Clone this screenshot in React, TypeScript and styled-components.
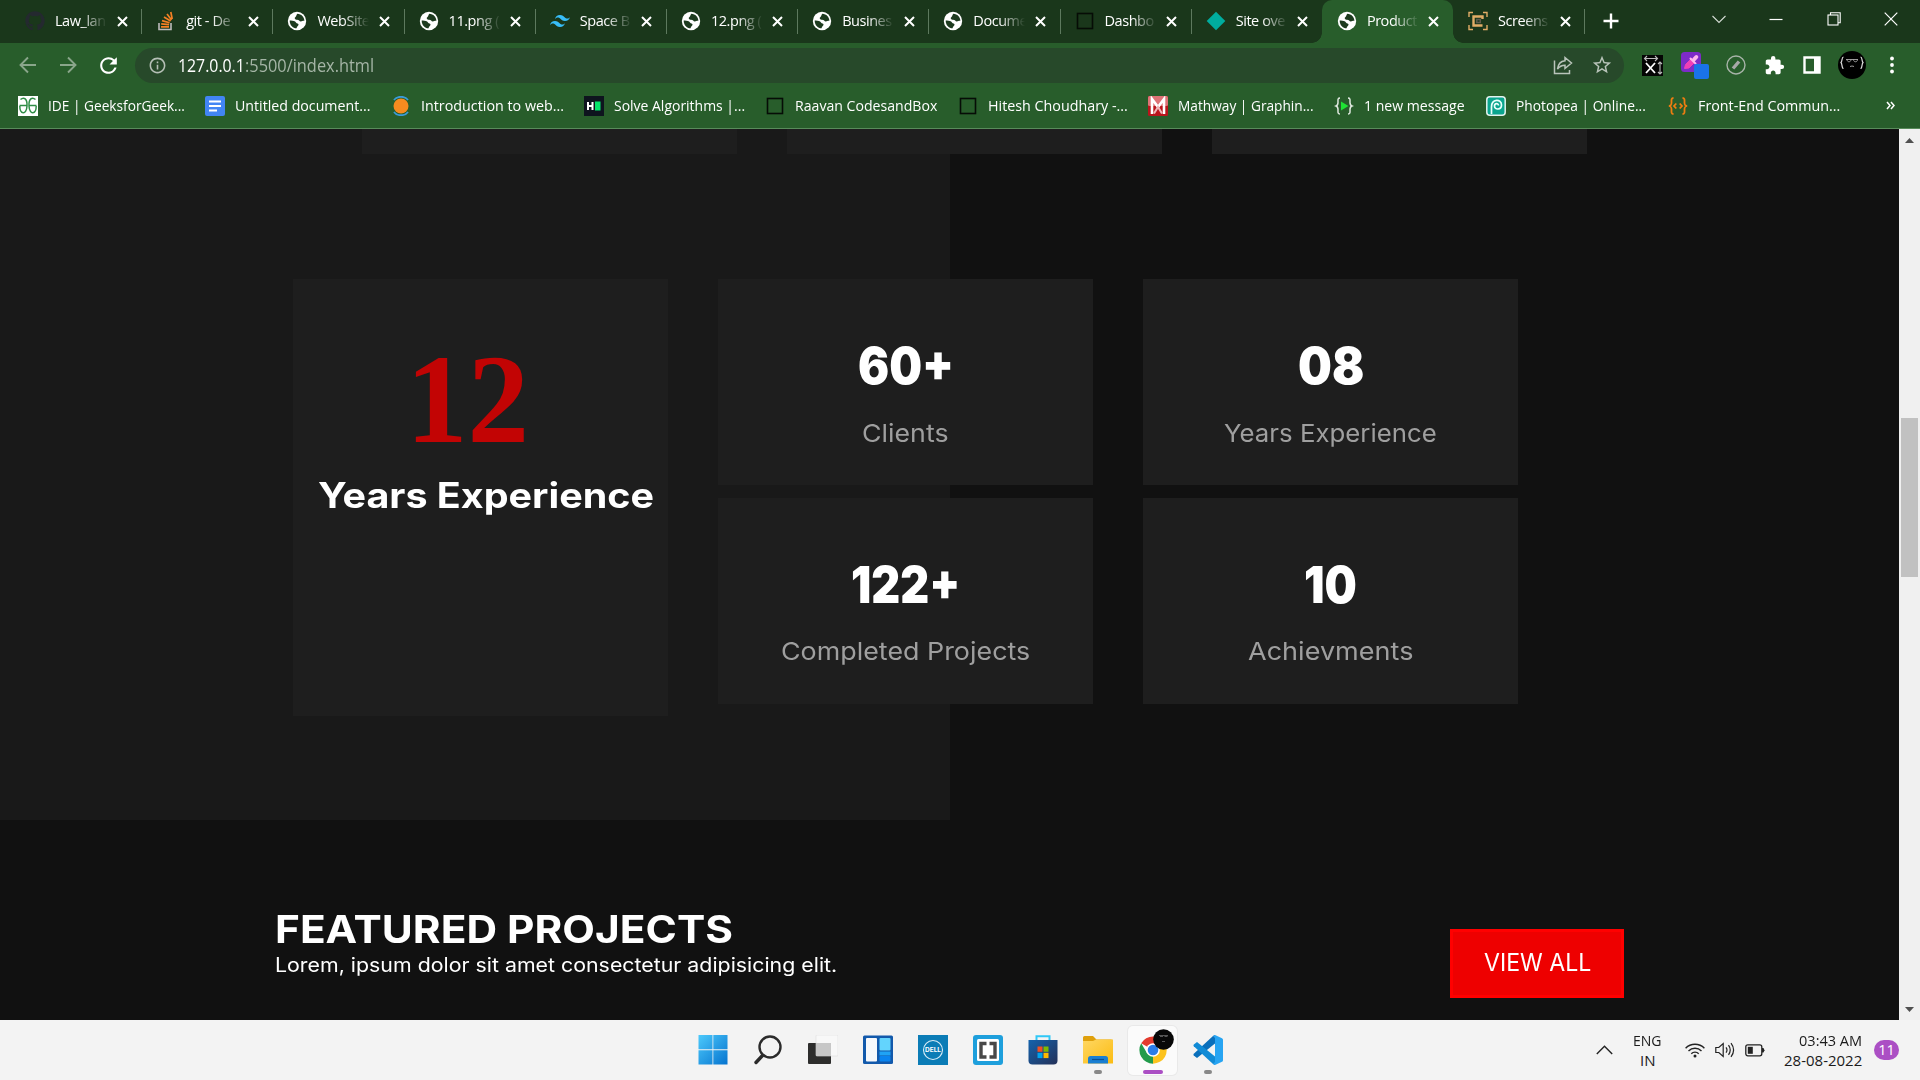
import React, { useLayoutEffect, useRef, useState } from "react";
import styled, { createGlobalStyle, css } from "styled-components";
import { MdExtension, MdRefresh, MdStarBorder, MdInfoOutline } from "react-icons/md";
import { FaGithub } from "react-icons/fa";
import { SiTailwindcss } from "react-icons/si";

const GlobalStyle = createGlobalStyle`
  * { box-sizing: border-box; }
  body { margin: 0; background: #111; overflow: hidden; }
`;

const ui = `"Open Sans", "Noto Sans", sans-serif`;
const display = `Inter, "Open Sans", sans-serif`;

/* ---------- text set to a fixed measure ---------- */

const Measure = styled.span<{ $w: number }>`
  display: block;
  width: ${(p) => p.$w}px;
  white-space: nowrap;
`;
const Run = styled.span`
  display: inline-block;
  transform-origin: 0 50%;
  vertical-align: top;
`;

function FitText({ w, children }: { w: number; children: React.ReactNode }) {
  const ref = useRef<HTMLSpanElement>(null);
  const [scale, setScale] = useState(1);
  useLayoutEffect(() => {
    if (ref.current) setScale(w / ref.current.offsetWidth);
  }, [w]);
  return (
    <Measure $w={w}>
      <Run ref={ref} style={{ transform: `scaleX(${scale})` }}>
        {children}
      </Run>
    </Measure>
  );
}

/* ---------- browser chrome ---------- */

const Screen = styled.div`
  width: 1920px;
  height: 1080px;
  display: flex;
  flex-direction: column;
  font-family: ${ui};
  color: #fff;
  overflow: hidden;
`;

const TabStrip = styled.div`
  height: 43px;
  flex: none;
  display: flex;
  padding-left: 10px;
  background: #1a371b;
`;

const TabBox = styled.div<{ $active?: boolean; $line?: boolean }>`
  position: relative;
  width: 131.2px;
  height: 43px;
  flex: none;
  display: flex;
  align-items: center;
  padding: 0 0 1px 15px;
  ${(p) =>
    p.$active &&
    css`
      background: #285d2b;
      border-radius: 10px 10px 0 0;
      &::before,
      &::after {
        content: "";
        position: absolute;
        bottom: 0;
        width: 10px;
        height: 10px;
      }
      &::before {
        left: -10px;
        background: radial-gradient(circle at 0 0, transparent 9.5px, #285d2b 10px);
      }
      &::after {
        right: -10px;
        background: radial-gradient(circle at 100% 0, transparent 9.5px, #285d2b 10px);
      }
    `}
  ${(p) =>
    p.$line &&
    css`
      &::after {
        content: "";
        position: absolute;
        right: -1px;
        top: 9px;
        width: 1px;
        height: 25px;
        background: #5d795e;
      }
    `}
`;

const TabIcon = styled.span`
  width: 20px;
  height: 20px;
  flex: none;
  display: grid;
  place-items: center;
`;

const TabLabel = styled.span`
  width: 52px;
  margin-left: 10px;
  overflow: hidden;
  white-space: nowrap;
  font-size: 14.5px;
  line-height: 22px;
  letter-spacing: -0.45px;
  mask-image: linear-gradient(90deg, #000 50%, transparent 100%);
`;

const CloseMark = styled.svg`
  width: 11px;
  height: 11px;
  margin-left: 9.5px;
`;

const PlusMark = styled.svg`
  width: 16px;
  height: 16px;
  margin: 13px 0 0 19px;
`;

const WindowControls = styled.div`
  margin-left: auto;
  margin-right: 22px;
  height: 37px;
  display: flex;
  align-items: center;
  gap: 43.5px;
`;

const Toolbar = styled.div`
  height: 40px;
  flex: none;
  display: flex;
  align-items: center;
  padding: 5px 20px 0 17px;
  background: #285d2b;
`;

const NavIcons = styled.div`
  width: 118px;
  display: flex;
  align-items: center;
  gap: 17.5px;
  margin-top: -1px;
  color: #fff;
`;

const Omnibox = styled.div`
  width: 1489px;
  height: 35px;
  border-radius: 18px;
  background: #27492a;
  display: flex;
  align-items: center;
  padding: 0 11px 0 13px;
`;

const Address = styled.div`
  display: flex;
  margin: -1px 0 0 11px;
  flex: 1;
  font-size: 17.5px;
  line-height: 26px;
`;
const AddressPath = styled.div`
  color: #a5b5a6;
`;
const OmniActions = styled.div`
  display: flex;
  align-items: center;
  gap: 18px;
  margin-top: -1px;
  color: #b9c4ba;
`;

const Extensions = styled.div`
  flex: 1;
  display: flex;
  align-items: center;
  justify-content: space-between;
  margin: -1px 0 0 18px;
`;

const BookmarkBar = styled.div`
  height: 46px;
  flex: none;
  display: flex;
  align-items: center;
  padding: 0 24px 0 18px;
  background: #285d2b;
  border-bottom: 1px solid #588b5a;
`;

const Bookmark = styled.div<{ $w: number }>`
  width: ${(p) => p.$w}px;
  flex: none;
  display: flex;
  align-items: center;
  gap: 10px;
  font-size: 14.5px;
  line-height: 22px;
`;

const Overflow = styled.svg`
  width: 10px;
  height: 10px;
  margin-left: auto;
`;

/* ---------- page ---------- */

const Viewport = styled.div`
  height: 891px;
  flex: none;
  display: flex;
`;
const Page = styled.main`
  width: 1899px;
  display: flex;
  flex-direction: column;
  background: #111;
  font-family: ${display};
`;
const StatsSection = styled.section`
  height: 691px;
  background: linear-gradient(90deg, #191919 950px, #111 950px);
`;
const ServiceRow = styled.div`
  display: flex;
  gap: 50px;
  padding-left: 362px;
  margin-bottom: 125px;
`;
const ServiceCard = styled.div`
  width: 375px;
  height: 25px;
  background: #1e1e1e;
`;
const StatsGrid = styled.div`
  display: grid;
  grid-template-columns: 375px 375px 375px;
  grid-template-rows: 206px 206px 12px;
  column-gap: 50px;
  row-gap: 13px;
  padding-left: 293px;
`;
const HeroCard = styled.article`
  grid-row: 1 / 4;
  height: 437px;
  background: #1e1e1e;
  padding: 57px 0 0 25px;
`;
const HeroNumber = styled.div`
  padding-left: 88px;
  font: bold 127px/126px "Liberation Serif", serif;
  color: #c20404;
`;
const HeroLabel = styled.div`
  margin-top: 12px;
  font-size: 35px;
  line-height: 42px;
  font-weight: 700;
`;
const StatCard = styled.article`
  background: #1e1e1e;
  padding-top: 57px;
  display: flex;
  flex-direction: column;
  align-items: center;
`;
const StatNumber = styled.div`
  font-size: 50.6px;
  line-height: 60px;
  font-weight: 900;
`;
const StatLabel = styled.div<{ $gap: number }>`
  margin-top: ${(p) => p.$gap}px;
  font-size: 24.6px;
  line-height: 30px;
  color: #9f9f9f;
`;
const Featured = styled.section`
  height: 200px;
  display: flex;
  justify-content: space-between;
  padding: 86px 275px 0 275px;
`;
const Title = styled.h2`
  margin: 0;
  font-size: 38.5px;
  line-height: 46px;
  font-weight: 700;
`;
const Subtitle = styled.p`
  margin: 1px 0 0;
  font-size: 19.6px;
  line-height: 24px;
`;
const ViewAll = styled.button`
  width: 174px;
  height: 69px;
  margin: 23px 0 0;
  padding: 0 0 4px 31px;
  border: 3px solid #f00;
  background: #ee0000;
  color: #fff;
  font-family: ${display};
  font-size: 24.6px;
  text-align: left;
`;

const Scrollbar = styled.div`
  width: 21px;
  display: flex;
  flex-direction: column;
  align-items: center;
  justify-content: space-between;
  padding: 9px 0 8px;
  background: #f0f0f0;
`;
const Thumb = styled.div`
  width: 17px;
  height: 159px;
  margin-top: 275px;
  margin-bottom: auto;
  background: #c1c1c1;
`;

/* ---------- taskbar ---------- */

const Taskbar = styled.footer`
  height: 60px;
  flex: none;
  display: flex;
  background: #f3f3f3;
  color: #1b1b1b;
  padding-left: 688px;
`;
const Apps = styled.div`
  display: flex;
  gap: 6px;
`;
const AppTile = styled.div<{ $on?: boolean }>`
  width: 49px;
  height: 49px;
  margin-top: 6px;
  border-radius: 5px;
  display: flex;
  flex-direction: column;
  align-items: center;
  padding-top: 9px;
  ${(p) => p.$on && "background:#fbfbfb; box-shadow:0 0 0 1px #e9e9e9;"}
`;
const ChromeMark = styled.svg`
  width: 30px;
  height: 30px;
  overflow: visible;
`;
const Pip = styled.i<{ $on?: boolean }>`
  width: ${(p) => (p.$on ? 20 : 8)}px;
  height: 4px;
  margin-top: 5px;
  border-radius: 2px;
  background: ${(p) => (p.$on ? "#ab4fc4" : "#888")};
`;
const Tray = styled.div`
  margin-left: auto;
  display: flex;
  align-items: center;
  padding-right: 21px;
  font-size: 15px;
  line-height: 20px;
`;
const Stack = styled.div<{ $end?: boolean; $ml: number }>`
  display: flex;
  flex-direction: column;
  align-items: ${(p) => (p.$end ? "flex-end" : "center")};
  margin: -1px 0 0 ${(p) => p.$ml}px;
`;
const TrayIcons = styled.div`
  display: flex;
  gap: 10px;
  margin-left: 23px;
`;
const Count = styled.span`
  width: 25px;
  height: 20px;
  margin-left: 12px;
  border-radius: 10px;
  background: #ab4fc4;
  color: #fff;
  font-size: 14.5px;
  text-align: center;
`;

/* ---------- drawings ---------- */

const Globe = () => (
  <svg width="20" height="20" viewBox="0 0 20 20">
    <circle cx="10" cy="10" r="9.2" fill="#fff" />
    <path
      d="M10.300 2.800C9 4 9.800 5.200 8.300 6.200 7 7 8.200 8.800 10 8.800c2.200 0 2.300 1.700 3.800 1.700 1.300 0 2-.8 3.600-.6C17.300 6 14.500 3 10.300 2.800Z"
      fill="#1d3b1f"
    />
    <path
      d="M2.700 9.500c2.500-.3 5.300.4 6.300 1.900.9 1.400 2.700.6 2.500 2.300-.1 1.300-1.700 1.200-1.900 3.600C5.700 17.300 2.600 14 2.700 9.500Z"
      fill="#1d3b1f"
    />
  </svg>
);
const Box = () => (
  <svg width="18" height="18" viewBox="0 0 18 18">
    <rect x="1.500" y="1.500" width="15" height="15" fill="none" stroke="#060c06" strokeWidth="1.600" />
  </svg>
);
const StackOverflow = () => (
  <svg width="18" height="20" viewBox="0 0 18 20">
    <path d="M2 12v6.500h12V12" fill="none" stroke="#bcbbbb" strokeWidth="1.600" />
    <path d="M4 15.800h8M4.200 12.800l7.900.9M5 9.600l7.500 2.200M7 6.100l6.600 4M10 3l4.600 6M13.800 1l1.400 7" stroke="#f48024" strokeWidth="1.700" />
  </svg>
);
const Diamond = () => (
  <svg width="20" height="20" viewBox="0 0 20 20">
    <path d="M10 .7 19.300 10 10 19.300.7 10Z" fill="#00ad9f" />
  </svg>
);
const Capture = () => (
  <svg width="20" height="20" viewBox="0 0 20 20" fill="none" stroke="#e2ad67">
    <path d="M1 6V1.500h4M15 1.500h4V6M19 14v4.500h-4M5 18.500H1V14" strokeWidth="1.400" />
    <path d="M14.500 8V5.500h-9v9h9" strokeWidth="2.400" />
    <rect x="8.800" y="8.500" width="3.500" height="3" stroke="#5f5b4c" strokeWidth="1.500" />
  </svg>
);

const tabs: { icon: React.ReactNode; label: string; active?: boolean }[] = [
  { icon: <FaGithub size={20} color="#24292f" />, label: "Law_lan" },
  { icon: <StackOverflow />, label: "git - De" },
  { icon: <Globe />, label: "WebSite" },
  { icon: <Globe />, label: "11.png (" },
  { icon: <SiTailwindcss size={20} color="#38bdf8" />, label: "Space B" },
  { icon: <Globe />, label: "12.png (" },
  { icon: <Globe />, label: "Busines" },
  { icon: <Globe />, label: "Docume" },
  { icon: <Box />, label: "Dashbo" },
  { icon: <Diamond />, label: "Site ove" },
  { icon: <Globe />, label: "Product", active: true },
  { icon: <Capture />, label: "Screens" },
];

const bookmarks: { icon: React.ReactNode; label: string; w: number; slot: number }[] = [
  {
    label: "IDE | GeeksforGeek...", w: 137, slot: 187,
    icon: (
      <svg width="20" height="20" viewBox="0 0 20 20">
        <rect width="20" height="20" fill="#fff" />
        <path d="M2.500 3.500C6 .5 9.300 3 9 9.500H1.500M1.800 10c0 8.500 6.700 9.500 7.200 0M17.500 3.500C14 .5 10.700 3 11 9.500h7.500M18.200 10c0 8.500-6.700 9.500-7.200 0" fill="none" stroke="#2f8d46" strokeWidth="1.500" />
      </svg>
    ),
  },
  {
    label: "Untitled document...", w: 135, slot: 186,
    icon: (
      <svg width="20" height="20" viewBox="0 0 20 20">
        <rect width="20" height="20" rx="2" fill="#4285f4" />
        <path d="M4 5.500h12M4 10h12M4 14.500h8" stroke="#fff" strokeWidth="2" />
      </svg>
    ),
  },
  {
    label: "Introduction to web...", w: 143, slot: 193,
    icon: (
      <svg width="20" height="20" viewBox="0 0 20 20">
        <circle cx="10" cy="10" r="7.500" fill="#f68b1f" />
        <path d="M3 4C6-.3 14-.3 17 4M3 16c3 4.300 11 4.300 14 0" fill="none" stroke="#3b9bd8" strokeWidth="1.800" />
      </svg>
    ),
  },
  {
    label: "Solve Algorithms |...", w: 131, slot: 181,
    icon: (
      <svg width="20" height="20" viewBox="0 0 20 20">
        <rect width="20" height="20" fill="#0e141e" />
        <path d="M4 6v8M8.500 6v8M4 10h4.500" stroke="#fff" strokeWidth="2" />
        <rect x="11" y="5.500" width="5.500" height="9" fill="#05e36a" />
      </svg>
    ),
  },
  { label: "Raavan CodesandBox", w: 142, slot: 193, icon: <Box /> },
  { label: "Hitesh Choudhary -...", w: 140, slot: 190, icon: <Box /> },
  {
    label: "Mathway | Graphin...", w: 136, slot: 186,
    icon: (
      <svg width="20" height="20" viewBox="0 0 20 20">
        <rect width="20" height="20" rx="1.500" fill="#b9151b" />
        <rect width="20" height="10" rx="1.500" fill="#de7376" />
        <path d="M4 18V3l6 8 6-8v15" fill="none" stroke="#fff" strokeWidth="2.600" />
        <path d="M6 17.500 10 11l4 6.500" fill="none" stroke="#efb5b7" strokeWidth="2" />
      </svg>
    ),
  },
  {
    label: "1 new message", w: 101, slot: 152,
    icon: (
      <svg width="20" height="20" viewBox="0 0 20 20">
        <path d="M6 2C3.500 2 4 4 4 6.500S3.500 9.500 2 10c1.500.5 2 1 2 3.500S3.500 18 6 18M14 2c2.500 0 2 2 2 4.500s.5 3 2 3.500c-1.500.5-2 1-2 3.500s.5 4.500-2 4.500" fill="none" stroke="#dfe8df" strokeWidth="1.500" />
        <path d="M7 5.500 14.500 10 7 14.500Z" fill="#1fe334" />
      </svg>
    ),
  },
  {
    label: "Photopea | Online...", w: 130, slot: 182,
    icon: (
      <svg width="20" height="20" viewBox="0 0 20 20">
        <rect x=".8" y=".8" width="18.400" height="18.400" rx="3" fill="#0ba58e" stroke="#e4f2ef" strokeWidth="1.500" />
        <path d="M5.500 18v-7C5.500 2.500 15.500 2.500 15.500 9c0 5-7 5.300-7 1 0-3 4-3 4-.5" fill="none" stroke="#e9fffb" strokeWidth="1.700" />
      </svg>
    ),
  },
  {
    label: "Front-End Commun...", w: 142, slot: 170,
    icon: (
      <svg width="20" height="20" viewBox="0 0 20 20" fill="none" stroke="#ef7d11" strokeWidth="1.800">
        <path d="M5.500 2C3 2 3.500 4 3.500 6.500S3 9.500 1 10c2 .5 2.500 1 2.500 3.500S3 18 5.500 18M14.500 2c2.500 0 2 2 2 4.500s.5 3 2.500 3.500c-2 .5-2.500 1-2.500 3.500s.5 4.500-2 4.500" />
        <path d="M8.300 7.500 6 10l2.300 2.500M11.700 7.500 14 10l-2.300 2.500" />
      </svg>
    ),
  },
];

const Arrow = ({ flip }: { flip?: boolean }) => (
  <svg width="22" height="22" viewBox="0 0 22 22">
    <path
      d={flip ? "M3 11h15M11 3.500 18.500 11 11 18.500" : "M19 11H4M11 3.500 3.500 11 11 18.500"}
      fill="none" stroke="#8aa68b" strokeWidth="1.900"
    />
  </svg>
);

const Stat = ({ n, nw, label, lw, gap = 22 }: { n: string; nw: number; label: string; lw: number; gap?: number }) => (
  <StatCard>
    <StatNumber><FitText w={nw}>{n}</FitText></StatNumber>
    <StatLabel $gap={gap}><FitText w={lw}>{label}</FitText></StatLabel>
  </StatCard>
);

export default function App() {
  return (
    <Screen>
      <GlobalStyle />
      <TabStrip>
        {tabs.map((t, i) => (
          <TabBox key={i} $active={t.active} $line={!t.active && !tabs[i + 1]?.active}>
            <TabIcon>{t.icon}</TabIcon>
            <TabLabel>{t.label}</TabLabel>
            <CloseMark viewBox="0 0 11 11">
              <path d="m1 1 9 9M10 1l-9 9" stroke="#fff" strokeWidth="2" />
            </CloseMark>
          </TabBox>
        ))}
        <PlusMark viewBox="0 0 16 16"><path d="M8 .5v15M.5 8h15" stroke="#fff" strokeWidth="2.400" /></PlusMark>
        <WindowControls>
          <svg width="14" height="14" viewBox="0 0 14 14"><path d="m.5 4 6.500 6.500L13.500 4" fill="none" stroke="#d5dcd5" strokeWidth="1.100" /></svg>
          <svg width="14" height="14" viewBox="0 0 14 14"><path d="M.5 7.500h13" stroke="#fff" strokeWidth="1.200" /></svg>
          <svg width="14" height="14" viewBox="0 0 14 14" fill="none" stroke="#fff" strokeWidth="1.100"><rect x="1" y="3" width="10" height="10" /><path d="M3.500 3V.8h9.700v10H11" /></svg>
          <svg width="14" height="14" viewBox="0 0 14 14"><path d="m.7.7 12.600 12.600M13.300.7.7 13.300" stroke="#fff" strokeWidth="1.200" /></svg>
        </WindowControls>
      </TabStrip>

      <Toolbar>
        <NavIcons>
          <Arrow />
          <Arrow flip />
          <MdRefresh size={25} />
        </NavIcons>
        <Omnibox>
          <MdInfoOutline size={19} color="#b5bfb6" />
          <Address>
            <FitText w={67}>127.0.0.1</FitText>
            <AddressPath><FitText w={129}>:5500/index.html</FitText></AddressPath>
          </Address>
          <OmniActions>
            <svg width="20" height="20" viewBox="0 0 20 20" fill="none" stroke="currentColor" strokeWidth="1.500">
              <path d="M1.500 5.500v13h15V15" />
              <path d="M12 2.500 18.500 8 12 13.500v-3.300c-3 0-5.500 1-7.500 4 .6-5 3.500-8 7.500-8.400Z" />
            </svg>
            <MdStarBorder size={22} />
          </OmniActions>
        </Omnibox>
        <Extensions>
          <svg width="21" height="21" viewBox="0 0 21 21" fill="none" stroke="#fff">
            <rect width="21" height="21" fill="#050505" stroke="none" />
            <path d="m4 8 9 10M13 8 4 18" strokeWidth="1.800" />
            <path d="M2.500 3.500h13M5 1 2.500 3.500 5 6M13 1l2.500 2.500L13 6M18 7v12M16 9l2-2 2 2M16 17l2 2 2-2" stroke="#bbb" strokeWidth="1.100" />
          </svg>
          <svg width="28" height="28" viewBox="0 0 28 28">
            <rect x="0" y="1" width="20" height="20" rx="3.500" fill="#7d2bc8" />
            <path d="m3.500 17.500 1-4 6-6 3.500 3.500-6 6Z" fill="#f13fb7" stroke="#f13fb7" strokeWidth="1" />
            <path d="m9.500 7.500 5 5" stroke="#ffb5ee" strokeWidth="2" strokeLinecap="round" />
            <path d="m13 8.500 2.300-2.500" stroke="#ffb5ee" strokeWidth="4" strokeLinecap="round" />
            <rect x="13" y="13" width="15" height="15" rx="2" fill="#1a73e8" />
          </svg>
          <svg width="20" height="20" viewBox="0 0 20 20">
            <circle cx="10" cy="10" r="9" fill="none" stroke="#a8b4a9" strokeWidth="1.400" />
            <path d="m7 13.500 6-7" stroke="#a8a8a8" strokeWidth="3.400" />
          </svg>
          <MdExtension size={21} color="#fff" />
          <svg width="18" height="18" viewBox="0 0 18 18">
            <path d="M1.500 1.500h15v15h-15Z" fill="none" stroke="#fff" strokeWidth="2.400" />
            <path d="M11 1h6v16h-6Z" fill="#fff" />
          </svg>
          <svg width="28" height="28" viewBox="0 0 28 28" fill="none" stroke="#ddd">
            <circle cx="14" cy="14" r="14" fill="#000" stroke="none" />
            <path d="M5.500 6C3.500 6 4.500 10 3 11.500c1.500 1.500.5 6 2.500 6M22.500 6c2 0 1 4 2.500 5.500-1.500 1.500-.5 6-2.500 6" strokeWidth="1.200" />
            <path d="M8 8.500h12M9 8.500c0 3 4 3 4 0M15.500 8.500c0 3 4 3 4 0M12 15.500q2-1 4 0" stroke="#aaa" strokeWidth=".9" />
          </svg>
          <svg width="16" height="18" viewBox="0 0 16 18" fill="#fff"><circle cx="8" cy="2.500" r="1.900" /><circle cx="8" cy="9" r="1.900" /><circle cx="8" cy="15.500" r="1.900" /></svg>
        </Extensions>
      </Toolbar>

      <BookmarkBar>
        {bookmarks.map((b) => (
          <Bookmark key={b.label} $w={b.slot}>
            <TabIcon>{b.icon}</TabIcon>
            <FitText w={b.w}>{b.label}</FitText>
          </Bookmark>
        ))}
        <Overflow viewBox="0 0 10 10"><path d="m1 1 3 3.500L1 8M5 1l3 3.500L5 8" fill="none" stroke="#fff" strokeWidth="1.500" /></Overflow>
      </BookmarkBar>

      <Viewport>
        <Page>
          <StatsSection>
            <ServiceRow><ServiceCard /><ServiceCard /><ServiceCard /></ServiceRow>
            <StatsGrid>
              <HeroCard>
                <HeroNumber><FitText w={123}>12</FitText></HeroNumber>
                <HeroLabel><FitText w={336}>Years Experience</FitText></HeroLabel>
              </HeroCard>
              <Stat n="60+" nw={96} label="Clients" lw={87} />
              <Stat n="08" nw={66} label="Years Experience" lw={213} />
              <Stat n="122+" nw={109} label="Completed Projects" lw={249} gap={21} />
              <Stat n="10" nw={53} label="Achievments" lw={165} gap={21} />
            </StatsGrid>
          </StatsSection>
          <Featured>
            <div>
              <Title><FitText w={458}>FEATURED PROJECTS</FitText></Title>
              <Subtitle><FitText w={562}>Lorem, ipsum dolor sit amet consectetur adipisicing elit.</FitText></Subtitle>
            </div>
            <ViewAll><FitText w={107}>VIEW ALL</FitText></ViewAll>
          </Featured>
        </Page>
        <Scrollbar>
          <svg width="9" height="5" viewBox="0 0 9 5"><path d="M0 5 4.500 0 9 5Z" fill="#505050" /></svg>
          <Thumb />
          <svg width="9" height="5" viewBox="0 0 9 5"><path d="M0 0 4.500 5 9 0Z" fill="#505050" /></svg>
        </Scrollbar>
      </Viewport>

      <Taskbar>
        <Apps>
          <AppTile>
            <svg width="30" height="30" viewBox="0 0 30 30">
              <defs><linearGradient id="win" x2="1" y2="1"><stop stopColor="#4cc9fb" /><stop offset="1" stopColor="#0573cf" /></linearGradient></defs>
              <path d="M.5 0h14v14.300H.5ZM15.300 0h14.200v14.300H15.300ZM.5 15.200h14v14.300H.5ZM15.300 15.200h14.200v14.300H15.300Z" fill="url(#win)" />
            </svg>
          </AppTile>
          <AppTile>
            <svg width="30" height="30" viewBox="0 0 30 30" fill="none" stroke="#2b2b2b" strokeLinecap="round">
              <circle cx="17" cy="12" r="10.500" strokeWidth="2.400" /><path d="m9.500 20.500-6.500 7" strokeWidth="3.400" />
            </svg>
          </AppTile>
          <AppTile>
            <svg width="30" height="30" viewBox="0 0 30 30">
              <rect x="0" y="8" width="23" height="21" rx="1" fill="#2d2d2c" />
              <rect x="8" y="0" width="22" height="21" rx="1" fill="#f8f8f8" stroke="#dedede" strokeWidth=".6" />
              <rect x="8" y="8" width="15" height="13" fill="#c7c7c7" />
            </svg>
          </AppTile>
          <AppTile>
            <svg width="30" height="30" viewBox="0 0 30 30">
              <rect y=".5" width="30" height="28.500" rx="1.500" fill="#1259ab" />
              <rect x="3" y="3" width="11" height="23.500" rx="1" fill="#f6f8fb" />
              <rect x="16.500" y="3" width="11" height="12.500" rx="1" fill="#63d4fd" />
              <rect x="16.500" y="16.500" width="11" height="4" fill="#1fa3f5" /><rect x="16.500" y="21" width="11" height="5.500" rx="1" fill="#0a84ef" />
            </svg>
          </AppTile>
          <AppTile>
            <svg width="30" height="30" viewBox="0 0 30 30">
              <rect width="30" height="30" fill="#0b7cb6" />
              <circle cx="15" cy="15" r="9.500" fill="none" stroke="#d9edf7" strokeWidth="1.100" />
              <text x="15" y="17.400" textAnchor="middle" fontSize="6.500" fontWeight="700" fill="#fff" fontFamily="Inter, sans-serif">DELL</text>
            </svg>
          </AppTile>
          <AppTile>
            <svg width="30" height="30" viewBox="0 0 30 30">
              <rect width="30" height="30" rx="3" fill="#1e9fdc" />
              <rect x="4" y="4" width="22" height="22" rx="1.500" fill="#fff" />
              <path d="M13.500 8.500H8v13.500h5.500M16.500 8.500H22v13.500h-5.500" fill="none" stroke="#484848" strokeWidth="3.400" />
            </svg>
          </AppTile>
          <AppTile>
            <svg width="30" height="30" viewBox="0 0 30 30">
              <path d="M8.500 6V1.200h13V6" fill="none" stroke="#30c8f7" strokeWidth="2" />
              <defs><linearGradient id="store" x2="1" y2="1"><stop stopColor="#1463ad" /><stop offset="1" stopColor="#243058" /></linearGradient></defs>
              <path d="M.5 5h29v20.500a4 4 0 0 1-4 4h-21a4 4 0 0 1-4-4Z" fill="url(#store)" />
              <path d="M9.500 11.500h5v5.300h-5Z" fill="#f25022" /><path d="M15.500 11.500h5v5.300h-5Z" fill="#7fba00" />
              <path d="M9.500 17.800h5v5.300h-5Z" fill="#00a4ef" /><path d="M15.500 17.800h5v5.300h-5Z" fill="#ffb900" />
            </svg>
          </AppTile>
          <AppTile>
            <svg width="30" height="30" viewBox="0 0 30 30">
              <path d="M0 2.500Q0 1 1.500 1H10l3.500 3.500H28q2 0 2 2V12H0Z" fill="#dfa00c" />
              <defs><linearGradient id="folder" x2="1" y2="1"><stop stopColor="#ffd763" /><stop offset="1" stopColor="#fbbc12" /></linearGradient></defs>
              <path d="M0 6h10l3-1.500h17V28.500H0Z" fill="url(#folder)" />
              <path d="M5 28.500v-5q0-2.500 2.500-2.500h15q2.500 0 2.500 2.500v5Z" fill="#1a7fd2" /><path d="M9 24.500h12" stroke="#0a4f93" strokeWidth="1.200" />
            </svg>
            <Pip />
          </AppTile>
          <AppTile $on>
            <ChromeMark viewBox="2 5 30 30">
              <path d="M17 20 5.200 13.200A13.700 13.700 0 0 1 28.900 13.200Z" fill="#e33b2e" />
              <path d="M17 20 28.900 13.200A13.700 13.700 0 0 1 17 33.700Z" fill="#fcc31e" />
              <path d="M17 20V33.700A13.700 13.700 0 0 1 5.200 13.200l6 10.200Z" fill="#229b4b" />
              <circle cx="17" cy="20" r="6.800" fill="#fff" /><circle cx="17" cy="20" r="5.300" fill="#2a7de9" />
              <circle cx="27.500" cy="9.500" r="10.300" fill="#080808" />
              <path d="M23 5.500h9M24 6.500h3M28.500 6.500h3M26 11.500h3" stroke="#555" strokeWidth="1" />
            </ChromeMark>
            <Pip $on />
          </AppTile>
          <AppTile>
            <svg width="30" height="30" viewBox="0 0 30 30">
              <path d="M22 0v8.500L4 23 .8 20.500q-.8-.8 0-1.700L20 1Z" fill="#0a6fbb" />
              <path d="M22 30v-8.500L4 7 .8 9.500q-.8.8 0 1.700L20 29Z" fill="#118bd6" />
              <path d="m20 1 2-1 7 3.200q1 .5 1 1.500v20.600q0 1-1 1.500L22 30l-2-1 2-2V3Z" fill="#27a4f2" />
            </svg>
            <Pip />
          </AppTile>
        </Apps>
        <Tray>
          <svg width="17" height="10" viewBox="0 0 17 10"><path d="m.8 9 7.700-7.700L16.200 9" fill="none" stroke="#222" strokeWidth="1.400" /></svg>
          <Stack $ml={20}><FitText w={29}>ENG</FitText><FitText w={15}>IN</FitText></Stack>
          <TrayIcons>
            <svg width="20" height="16" viewBox="0 0 20 16" fill="none" stroke="#222" strokeWidth="1.400">
              <path d="M.6 6.200a13.300 13.300 0 0 1 18.800 0M3.500 9a9.200 9.200 0 0 1 13 0M6.300 11.700a5.200 5.200 0 0 1 7.400 0" /><circle cx="10" cy="14" r="1.500" fill="#222" stroke="none" />
            </svg>
            <svg width="20" height="16" viewBox="0 0 20 16" fill="none" stroke="#222" strokeWidth="1.200">
              <path d="M.8 5.500h3L8.200 1.500v13L3.800 10.500h-3ZM11 5.300q2 2.700 0 5.400M13.500 3.200q3.500 4.800 0 9.600M16 1.200q5.200 6.800 0 13.600" />
            </svg>
            <svg width="20" height="16" viewBox="0 0 20 16">
              <rect x=".8" y="2.800" width="16" height="11" rx="2" fill="none" stroke="#222" strokeWidth="1.300" /><rect x="2.800" y="4.800" width="5" height="7" fill="#222" /><path d="M17 6h1.500l1 2.300-1 2.300H17Z" fill="#222" />
            </svg>
          </TrayIcons>
          <Stack $end $ml={19}><FitText w={63}>03:43 AM</FitText><FitText w={78}>28-08-2022</FitText></Stack>
          <Count>11</Count>
        </Tray>
      </Taskbar>
    </Screen>
  );
}
